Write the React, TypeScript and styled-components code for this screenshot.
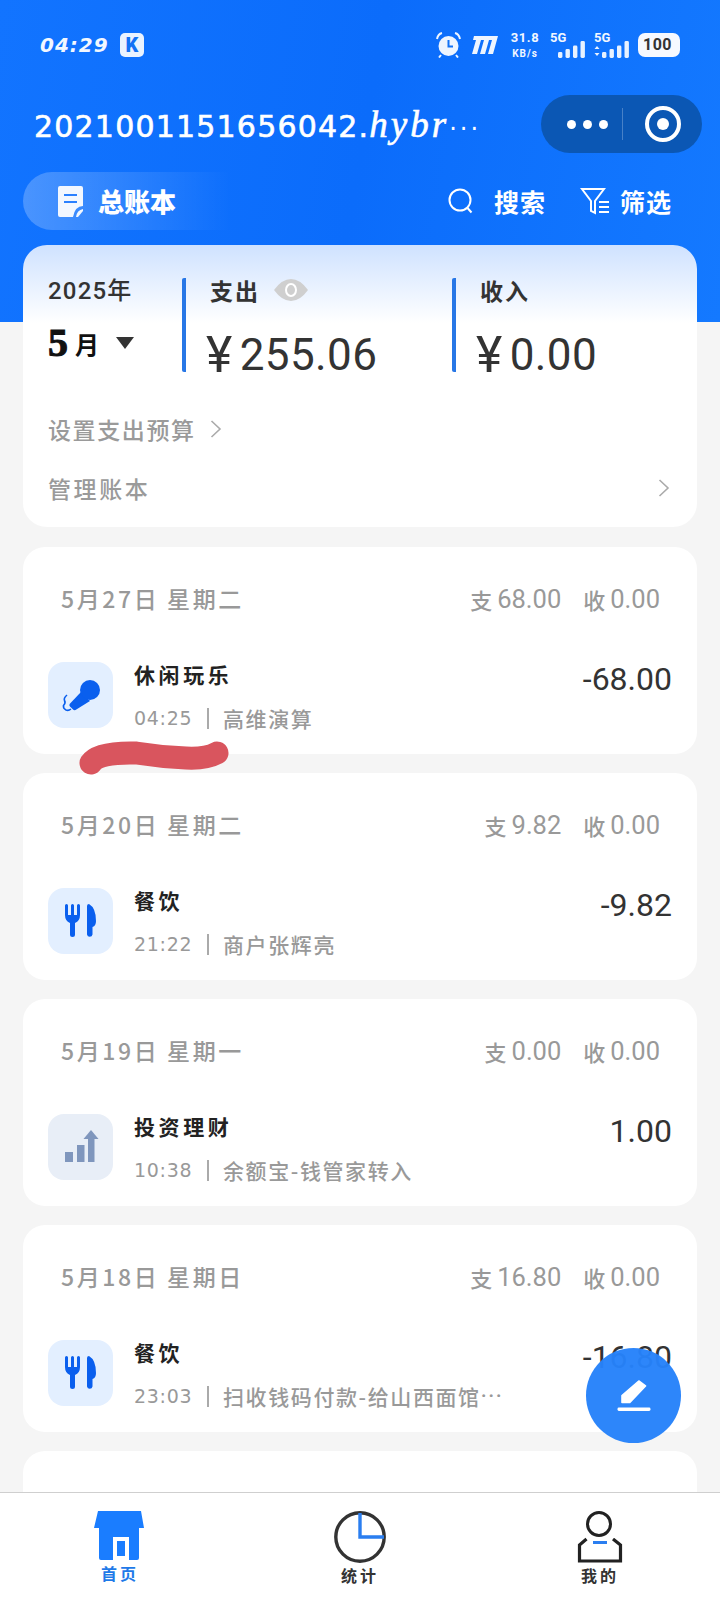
import * as React from 'react';
import styled, { createGlobalStyle } from 'styled-components';

const CJK = '"Noto Sans CJK SC", "Noto Sans", sans-serif';
const NUM = 'Roboto, "Noto Sans CJK SC", sans-serif';

const GlobalStyle = createGlobalStyle`
  html, body {
    margin: 0;
    padding: 0;
    background: #f5f5f5;
  }
  * {
    box-sizing: border-box;
  }
`;

const Page = styled.div`
  position: relative;
  display: flex;
  flex-direction: column;
  width: 720px;
  height: 1600px;
  overflow: hidden;
  font-family: ${CJK};
`;

const Scroll = styled.div`
  flex: 1;
  overflow: hidden;
  background:
    linear-gradient(100deg, #1274ff 0%, #0b6cfb 50%, #1479ff 100%) top / 100% 322px no-repeat,
    #f5f5f5;
`;

const StatusBar = styled.div`
  display: flex;
  align-items: center;
  height: 90px;
  padding: 0 40px;
  color: #f2f7ff;
`;

const Clock = styled.span`
  width: 71px;
  font: italic 700 20px/1 "DejaVu Sans", sans-serif;
  letter-spacing: 1px;
  white-space: nowrap;
`;

const KBadge = styled.span`
  display: flex;
  align-items: center;
  justify-content: center;
  width: 24px;
  height: 24px;
  margin-left: 9px;
  border-radius: 5px;
  background: #eaf3ff;
  color: #1272f5;
  font: 900 20px/1 Roboto, sans-serif;
`;

const StatusRight = styled.div`
  display: flex;
  align-items: center;
  margin-left: auto;
`;

const Speed = styled.div`
  display: flex;
  flex-direction: column;
  align-items: center;
  gap: 5px;
  width: 30px;
  margin: 0 10px 0 12px;
  font: 700 13px/1 Roboto, sans-serif;
  letter-spacing: 0.6px;
  small {
    font-size: 10px;
    letter-spacing: 1px;
  }
`;

const Signal = styled.div`
  position: relative;
  width: 36px;
  height: 26px;
  margin-right: 8px;
  span {
    position: absolute;
    left: 0;
    top: -1px;
    font: 700 13px/1 Roboto, sans-serif;
  }
  svg {
    position: absolute;
    right: 0;
    bottom: 0;
  }
`;

const Battery = styled.div`
  position: relative;
  width: 42px;
  height: 24px;
  padding-right: 3px;
  border-radius: 7px;
  background: #f6f9ff;
  color: #333;
  font: 700 16px/24px Roboto, sans-serif;
  letter-spacing: 0.5px;
  text-align: center;
`;

const TitleBar = styled.div`
  display: flex;
  align-items: center;
  justify-content: space-between;
  height: 58px;
  margin-top: 5px;
  padding: 0 18px 0 34px;
`;

const Title = styled.div`
  color: #fff;
  font: 400 30px/1 "DejaVu Sans", sans-serif;
  letter-spacing: 1.2px;
  -webkit-text-stroke: 0.6px #fff;
  white-space: nowrap;
  em {
    font-family: "Liberation Serif", serif;
    font-size: 37px;
    letter-spacing: 3px;
  }
  span {
    font-size: 24px;
    letter-spacing: 3px;
    -webkit-text-stroke: 0;
  }
`;

const Capsule = styled.div`
  display: flex;
  align-items: center;
  width: 161px;
  height: 58px;
  padding-left: 26px;
  border-radius: 29px;
  background: #0b57b4;
`;

const Dots = styled.div`
  display: flex;
  gap: 7px;
  width: 55px;
  i {
    width: 9px;
    height: 9px;
    border-radius: 50%;
    background: #fff;
  }
`;

const CapsuleBar = styled.div`
  width: 1px;
  height: 32px;
  background: rgba(255, 255, 255, 0.25);
`;

const Target = styled.div`
  display: flex;
  align-items: center;
  justify-content: center;
  width: 36px;
  height: 36px;
  margin-left: 22px;
  border: 4px solid #fff;
  border-radius: 50%;
  i {
    width: 12px;
    height: 12px;
    border-radius: 50%;
    background: #fff;
  }
`;

const Tabs = styled.div`
  display: flex;
  align-items: center;
  justify-content: space-between;
  height: 58px;
  margin-top: 19px;
  padding: 0 48px 0 23px;
  color: #fff;
`;

const BookTab = styled.div`
  display: flex;
  align-items: center;
  gap: 14px;
  width: 207px;
  height: 58px;
  padding-left: 35px;
  border-radius: 29px 0 0 29px;
  background: linear-gradient(90deg, rgba(255, 255, 255, 0.24), rgba(255, 255, 255, 0));
  font-size: 26px;
  font-weight: 900;
  line-height: 52px;
`;

const TabTools = styled.div`
  display: flex;
  align-items: center;
`;

const Tool = styled.div<{ $gap: number }>`
  display: flex;
  align-items: center;
  gap: ${p => p.$gap}px;
  margin-left: 34px;
  font-size: 25px;
  font-weight: 700;
  line-height: 50px;
  letter-spacing: 1px;
`;

const SummaryCard = styled.section`
  margin: 15px 23px 0;
  padding: 33px 0 19px 25px;
  border-radius: 24px;
  background: linear-gradient(180deg, #cfe2ff 0, #fff 78px);
`;

const SummaryTop = styled.div`
  display: flex;
  height: 94px;
`;

const DateCol = styled.div`
  width: 134px;
  color: #333;
`;

const Year = styled.div`
  font: 500 24px/26px ${NUM};
  letter-spacing: 1.2px;
`;

const Month = styled.div`
  display: flex;
  align-items: center;
  height: 40px;
  margin-top: 19px;
  color: #111;
  font-size: 24px;
  font-weight: 700;
  b {
    margin-right: 7px;
    font: 900 40px/1 "Liberation Serif", serif;
    -webkit-text-stroke: 1px #111;
  }
`;

const Caret = styled.i`
  width: 0;
  height: 0;
  margin-left: 17px;
  border-top: 12px solid #333;
  border-left: 9.5px solid transparent;
  border-right: 9.5px solid transparent;
`;

const Stat = styled.div<{ $width: number }>`
  display: flex;
  flex-direction: column;
  justify-content: space-between;
  width: ${p => p.$width}px;
  padding-left: 24px;
  border-left: 4px solid #2877e6;
  border-radius: 2px;
`;

const StatLabel = styled.div`
  display: flex;
  align-items: center;
  gap: 14px;
  height: 26px;
  color: #333;
  font-size: 23px;
  font-weight: 700;
  line-height: 22px;
  letter-spacing: 2px;
  padding-bottom: 3px;
`;

const StatAmount = styled.div`
  display: flex;
  align-items: center;
  margin-bottom: -3px;
  color: #333;
  font: 400 44px/40px ${NUM};
  letter-spacing: 0.4px;
`;

const Yen = styled.span`
  margin: 0 7px 0 -4px;
  font-size: 50px;
  font-weight: 400;
`;

const LinkRow = styled.div<{ $top: number; $stretch?: boolean; $spacing: number }>`
  display: flex;
  align-items: center;
  justify-content: ${p => (p.$stretch ? 'space-between' : 'flex-start')};
  gap: 14px;
  height: 40px;
  margin-top: ${p => p.$top}px;
  padding-right: 27px;
  color: #9a9a9a;
  font-size: 23px;
  font-weight: 500;
  letter-spacing: ${p => p.$spacing}px;
`;

const DayList = styled.div`
  display: flex;
  flex-direction: column;
  gap: 19px;
  margin: 20px 23px 0;
`;

const DayCard = styled.section`
  flex: none;
  height: 207px;
  padding: 33px 25px 0 25px;
  border-radius: 22px;
  background: #fff;
`;

const DayHead = styled.div`
  display: flex;
  align-items: center;
  justify-content: space-between;
  height: 40px;
  padding: 0 12px 0 13px;
  color: #999;
  font-size: 22px;
  font-weight: 500;
`;

const DayDate = styled.div`
  margin-top: -4px;
  font-size: 23px;
  letter-spacing: 2.6px;
  white-space: pre;
`;

const DayTotals = styled.div`
  display: flex;
  gap: 22px;
  span {
    display: flex;
    align-items: center;
    gap: 5px;
    margin-top: -3px;
  }
  b {
    margin-top: 3px;
    font: 400 25.5px/1 ${NUM};
  }
`;

const Row = styled.div`
  display: flex;
  height: 66px;
  margin-top: 42px;
`;

const IconBox = styled.div<{ $bg: string }>`
  flex: none;
  width: 65px;
  height: 66px;
  border-radius: 16px;
  background: ${p => p.$bg};
`;

const RowBody = styled.div`
  flex: 1;
  min-width: 0;
  padding-left: 21px;
`;

const RowTitle = styled.div`
  color: #222;
  font-size: 21px;
  font-weight: 700;
  line-height: 24px;
  letter-spacing: 3.6px;
`;

const RowSub = styled.div`
  display: flex;
  align-items: center;
  height: 24px;
  margin-top: 20px;
  color: #999;
  font-size: 21px;
  font-weight: 500;
  letter-spacing: 1.6px;
  white-space: nowrap;
`;

const RowTime = styled.span`
  width: 66px;
  font: 500 19px/1 "DejaVu Sans", sans-serif;
  letter-spacing: 0.7px;
`;

const RowBar = styled.i`
  width: 2px;
  height: 21px;
  margin: 0 14px 0 7px;
  background: #aaa;
`;

const MoreDots = styled.span`
  font-family: Roboto, sans-serif;
  letter-spacing: 1.6px;
`;

const RowAmount = styled.div`
  color: #333;
  font: 400 32px/34px ${NUM};
`;

const Fab = styled.div`
  position: absolute;
  left: 586px;
  top: 1348px;
  display: flex;
  align-items: center;
  justify-content: center;
  width: 95px;
  height: 95px;
  border-radius: 50%;
  background: rgba(38, 130, 250, 0.97);
`;

const Scribble = styled.svg`
  position: absolute;
  left: 76px;
  top: 740px;
`;

const Nav = styled.nav`
  display: grid;
  flex: none;
  grid-template-columns: repeat(3, 1fr);
  height: 108px;
  border-top: 1px solid #cfcfcf;
  background: #fff;
`;

const NavItem = styled.div<{ $active?: boolean }>`
  display: flex;
  flex-direction: column;
  align-items: center;
  padding-top: 18px;
  color: ${p => (p.$active ? '#1f7ae8' : '#333')};
  font-size: 16px;
  font-weight: 700;
  letter-spacing: 3px;
  span {
    line-height: 24px;
  }
`;

const BLUE = '#0a5fee';

const MicIcon = () => (
  <svg width="65" height="66" viewBox="0 0 65 66">
    <path d="M33 30 L42 39 L27.5 48 Q26 48.5 25 47.5 L22 44.5 Q21 43.5 21.6 42 Z" fill={BLUE} />
    <circle cx="42" cy="28" r="10" fill={BLUE} />
    <path d="M19 33 Q15.5 36 16.5 38.5 Q18 41 15.5 43.5 Q15 46.5 18 48 Q20.5 49 23 47" fill="none" stroke={BLUE} strokeWidth="1.6" />
  </svg>
);

const FoodIcon = () => (
  <svg width="65" height="66" viewBox="0 0 65 66" fill={BLUE}>
    <path d="M17 17.5 a1.5 1.5 0 0 1 3 0 V27 H23 V17.5 a1.5 1.5 0 0 1 3 0 V27 H29 V17.5 a1.5 1.5 0 0 1 3 0 V27 Q32 33 27 35 V46.5 a2.5 2.5 0 0 1 -5 0 V35 Q17 33 17 27 Z" />
    <path d="M39 18 Q39 16 41 16 Q48 20 48 33 Q48 38 44.5 39 V46.5 a2.8 2.8 0 0 1 -5.5 0 Z" />
  </svg>
);

const ChartIcon = () => (
  <svg width="65" height="66" viewBox="0 0 65 66" fill="#7f96bd">
    <rect x="17" y="38" width="8" height="10" />
    <rect x="29" y="31" width="7.5" height="17" />
    <rect x="40" y="24" width="6.5" height="24" />
    <path d="M43 16 L50.5 25 H35.5 Z" />
  </svg>
);

const ChevronIcon = () => (
  <svg width="12" height="20" viewBox="0 0 12 20" fill="none" stroke="#aaa" strokeWidth="1.6">
    <path d="M1.5 2 L10 10 L1.5 18" />
  </svg>
);

const SignalBars = ({ arrows }: { arrows?: boolean }) => (
  <svg width="36" height="17" viewBox="0 0 36 17" fill="#e8f2ff">
    {arrows && <path d="M3 5 L5.5 8 H0.5 Z M3 15 L0.5 12 H5.5 Z" />}
    <rect x="8" y="11" width="4.4" height="6" rx="1.4" />
    <rect x="15.5" y="8" width="4.4" height="9" rx="1.4" />
    <rect x="23" y="4.5" width="4.4" height="12.5" rx="1.4" />
    <rect x="30.5" y="0" width="4.4" height="17" rx="1.4" />
  </svg>
);

const days = [
  { date: '5月27日 星期二', out: '68.00', title: '休闲玩乐', time: '04:25', note: '高维演算', amount: '-68.00', kind: 'mic' },
  { date: '5月20日 星期二', out: '9.82', title: '餐饮', time: '21:22', note: '商户张辉亮', amount: '-9.82', kind: 'food' },
  { date: '5月19日 星期一', out: '0.00', title: '投资理财', time: '10:38', note: '余额宝-钱管家转入', amount: '1.00', kind: 'chart' },
  { date: '5月18日 星期日', out: '16.80', title: '餐饮', time: '23:03', note: '扫收钱码付款-给山西面馆', more: true, amount: '-16.80', kind: 'food' },
];

const App: React.FC = () => (
  <Page>
    <GlobalStyle />
    <Scroll>
      <StatusBar>
        <Clock>04:29</Clock>
        <KBadge>K</KBadge>
        <StatusRight>
          <svg width="27" height="26" viewBox="0 0 27 26" fill="none">
            <circle cx="13.5" cy="14" r="10" fill="#eef5ff" />
            <path d="M13.5 8 V14.5 H18" stroke="#1272f5" strokeWidth="2" />
            <path d="M2 7 Q3 2 7 1 M25 7 Q24 2 20 1 M6 23 L4 25.5 M21 23 L23 25.5" stroke="#eef5ff" strokeWidth="2" />
          </svg>
          <svg width="30" height="18" viewBox="0 0 30 18" fill="#eef5ff" style={{ marginLeft: 6 }}>
            <path d="M6 0 H30 L25 18 H20 L24 4 H21 L17 18 H12 L16 4 H13 L9 18 H4 L8 4 H5 Z" />
          </svg>
          <Speed>
            <span>31.8</span>
            <small>KB/s</small>
          </Speed>
          <Signal>
            <span>5G</span>
            <SignalBars />
          </Signal>
          <Signal>
            <span>5G</span>
            <SignalBars arrows />
          </Signal>
          <Battery>100</Battery>
        </StatusRight>
      </StatusBar>

      <TitleBar>
        <Title>
          2021001151656042.<em>hybr</em>
          <span>···</span>
        </Title>
        <Capsule>
          <Dots>
            <i />
            <i />
            <i />
          </Dots>
          <CapsuleBar />
          <Target>
            <i />
          </Target>
        </Capsule>
      </TitleBar>

      <Tabs>
        <BookTab>
          <svg width="26" height="31" viewBox="0 0 26 31" fill="#f2f7ff">
            <path d="M2 0 H23 Q25 0 25 2 V20 Q17 20 15 31 H2 Q0 31 0 29 V2 Q0 0 2 0 Z" />
            <path d="M25 23 V25 L20 31 H18 Q19 24 25 23 Z" />
            <path d="M6 9 H19 M6 16 H19" stroke="#2a80ff" strokeWidth="2.2" fill="none" />
          </svg>
          总账本
        </BookTab>
        <TabTools>
          <Tool $gap={20}>
            <svg width="26" height="26" viewBox="0 0 26 26" fill="none" stroke="#fff" strokeWidth="2">
              <ellipse cx="12" cy="12" rx="10.5" ry="10.5" />
              <path d="M19.5 20 L23.5 24.5" />
            </svg>
            搜索
          </Tool>
          <Tool $gap={10}>
            <svg width="30" height="28" viewBox="0 0 30 28" fill="none" stroke="#fff" strokeWidth="2">
              <path d="M2 2 H24 L15 14 V26 L11 24 V14 Z" />
              <path d="M19 15 H29 M19 20 H29 M19 25 H29" />
            </svg>
            筛选
          </Tool>
        </TabTools>
      </Tabs>

      <SummaryCard>
        <SummaryTop>
          <DateCol>
            <Year>2025年</Year>
            <Month>
              <b>5</b>月<Caret />
            </Month>
          </DateCol>
          <Stat $width={270}>
            <StatLabel>
              支出
              <svg width="34" height="22" viewBox="0 0 34 22">
                <path d="M0 11 Q8 0 17 0 Q26 0 34 11 Q26 22 17 22 Q8 22 0 11 Z" fill="#cfcfcf" />
                <ellipse cx="17" cy="11" rx="5" ry="6" fill="none" stroke="#fff" strokeWidth="2" />
              </svg>
            </StatLabel>
            <StatAmount>
              <Yen>¥</Yen>255.06
            </StatAmount>
          </Stat>
          <Stat $width={240}>
            <StatLabel>收入</StatLabel>
            <StatAmount>
              <Yen>¥</Yen>0.00
            </StatAmount>
          </Stat>
        </SummaryTop>
        <LinkRow $top={37} $spacing={1.6}>
          设置支出预算
          <ChevronIcon />
        </LinkRow>
        <LinkRow $top={19} $stretch $spacing={2.6}>
          管理账本
          <ChevronIcon />
        </LinkRow>
      </SummaryCard>

      <DayList>
        {days.map(day => (
          <DayCard key={day.date}>
            <DayHead>
              <DayDate>{day.date}</DayDate>
              <DayTotals>
                <span>
                  支<b>{day.out}</b>
                </span>
                <span>
                  收<b>0.00</b>
                </span>
              </DayTotals>
            </DayHead>
            <Row>
              <IconBox $bg={day.kind === 'chart' ? '#e8eef7' : '#e3efff'}>
                {day.kind === 'mic' && <MicIcon />}
                {day.kind === 'food' && <FoodIcon />}
                {day.kind === 'chart' && <ChartIcon />}
              </IconBox>
              <RowBody>
                <RowTitle>{day.title}</RowTitle>
                <RowSub>
                  <RowTime>{day.time}</RowTime>
                  <RowBar />
                  {day.note}
                  {day.more && <MoreDots>···</MoreDots>}
                </RowSub>
              </RowBody>
              <RowAmount>{day.amount}</RowAmount>
            </Row>
          </DayCard>
        ))}
        <DayCard />
      </DayList>
    </Scroll>

    <Nav>
      <NavItem $active>
        <svg width="52" height="50" viewBox="0 0 52 50">
          <path d="M4 0 H47 L50 17 H45 V47 Q45 49 43 49 H7 Q5 49 5 47 V17 H0 Z" fill="#1a7dff" />
          <rect x="19" y="26" width="16" height="23" fill="#fff" />
          <rect x="23" y="30" width="8" height="15" fill="#1a7dff" />
        </svg>
        <span>首页</span>
      </NavItem>
      <NavItem>
        <svg width="52" height="52" viewBox="0 0 52 52" fill="none">
          <circle cx="26" cy="26" r="24.2" stroke="#333" strokeWidth="3.4" />
          <path d="M26 2 V26 H50" stroke="#2a7ef0" strokeWidth="3.4" />
        </svg>
        <span>统计</span>
      </NavItem>
      <NavItem>
        <svg width="46" height="52" viewBox="0 0 46 52" fill="none">
          <circle cx="22" cy="13" r="11.5" stroke="#222" strokeWidth="3" />
          <path d="M9.5 28 L2.5 34 V50 H43.5 V34 L36 28" stroke="#222" strokeWidth="3.2" />
          <rect x="16" y="30" width="14" height="3" fill="#2a7ef0" />
        </svg>
        <span>我的</span>
      </NavItem>
    </Nav>

    <Fab>
      <svg width="36" height="32" viewBox="0 0 36 32" fill="#fff">
        <path d="M22.8 1 L29.5 6 L13.8 22.5 H6 V15.5 Z" stroke="#fff" strokeWidth="1.6" strokeLinejoin="round" />
        <rect x="1.5" y="27.5" width="33" height="3.4" rx="1.4" />
      </svg>
    </Fab>

    <Scribble width="158" height="40" viewBox="0 0 158 40">
      <path
        d="M15 23 Q22 12 60 13 Q85 17 110 18 Q130 19 141 13"
        fill="none"
        stroke="#d9555e"
        strokeWidth="23"
        strokeLinecap="round"
      />
    </Scribble>
  </Page>
);

export default App;
